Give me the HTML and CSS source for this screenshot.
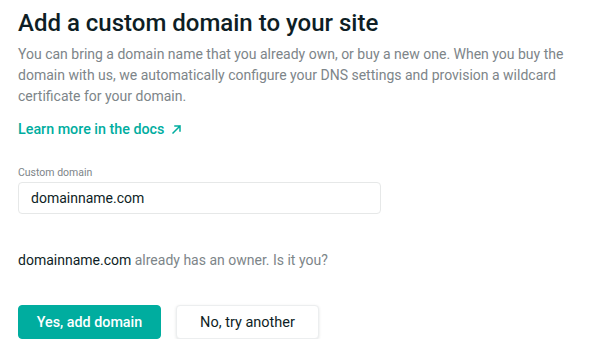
FILE: index.html
```html
<!DOCTYPE html>
<html lang="en">
<head>
<meta charset="utf-8">
<title>Add a custom domain</title>
<link rel="stylesheet" href="styles.css">
</head>
<body>
<main class="panel">
  <h1 class="title">Add a custom domain to your site</h1>
  <p class="intro">You can bring a domain name that you already own, or buy a new one. When you buy the domain with us, we automatically configure your DNS settings and provision a wildcard certificate for your domain.</p>
  <a class="docs-link" href="#">Learn more in the docs <svg class="arrow" width="9" height="9" viewBox="0 0 9 9" aria-hidden="true"><path d="M1 8 L8 1 M3 1 H8 V6" fill="none" stroke="currentColor" stroke-width="1.5" stroke-linecap="square"/></svg></a>
  <label class="field-label" for="domain">Custom domain</label>
  <div class="input" id="domain">domainname.com</div>
  <p class="owner"><span class="owner-domain">domainname.com</span> already has an owner. Is it you?</p>
  <div class="actions">
    <button class="btn btn-primary">Yes, add domain</button>
    <button class="btn btn-secondary">No, try another</button>
  </div>
</main>
</body>
</html>
```

FILE: styles.css
```css
* { box-sizing: border-box; }
html, body { margin: 0; padding: 0; background: #fff; }
body {
  font-family: Roboto, "Noto Sans", "Liberation Sans", sans-serif;
  color: #0e1e25;
  -webkit-font-smoothing: antialiased;
}
.panel {
  display: flex;
  flex-direction: column;
  align-items: flex-start;
  padding: 8px 18px 0 18px;
  width: 600px;
}
.title {
  margin: 0;
  font-size: 24px;
  line-height: 30px;
  font-weight: 500;
  color: #0e1e25;
}
.intro {
  margin: 6px 0 0 0;
  font-size: 14px;
  line-height: 21px;
  color: #7d8589;
}
.docs-link {
  margin-top: 12px;
  font-size: 14.3px;
  line-height: 21px;
  font-weight: 500;
  color: #00ad9f;
  text-decoration: none;
  display: inline-flex;
  align-items: center;
  gap: 8px;
}
.arrow { display: block; }
.field-label {
  margin-top: 26px;
  font-size: 10.5px;
  line-height: 14px;
  color: #7d8589;
}
.input {
  margin-top: 2px;
  width: 363px;
  height: 32px;
  border: 1px solid #e6e8e8;
  border-radius: 4px;
  padding: 0 12px;
  display: flex;
  align-items: center;
  font-size: 14px;
  color: #0e1e25;
}
.owner {
  margin: 36px 0 0 0;
  font-size: 14px;
  line-height: 21px;
  color: #7d8589;
}
.owner-domain { color: #0e1e25; }
.actions {
  margin-top: 34px;
  display: flex;
  gap: 15px;
}
.btn {
  height: 34px;
  width: 143px;
  border-radius: 4px;
  font-family: inherit;
  padding: 0;
  cursor: pointer;
}
.btn-primary {
  background: #00ad9f;
  border: 1px solid #00ad9f;
  color: #fff;
  font-size: 14.3px;
  font-weight: 500;
}
.btn-secondary {
  background: #fff;
  border: 1px solid #eceeef;
  color: #0e1e25;
  font-size: 14.5px;
  font-weight: 400;
  box-shadow: 0 1px 3px rgba(14, 30, 37, 0.12);
}
```
